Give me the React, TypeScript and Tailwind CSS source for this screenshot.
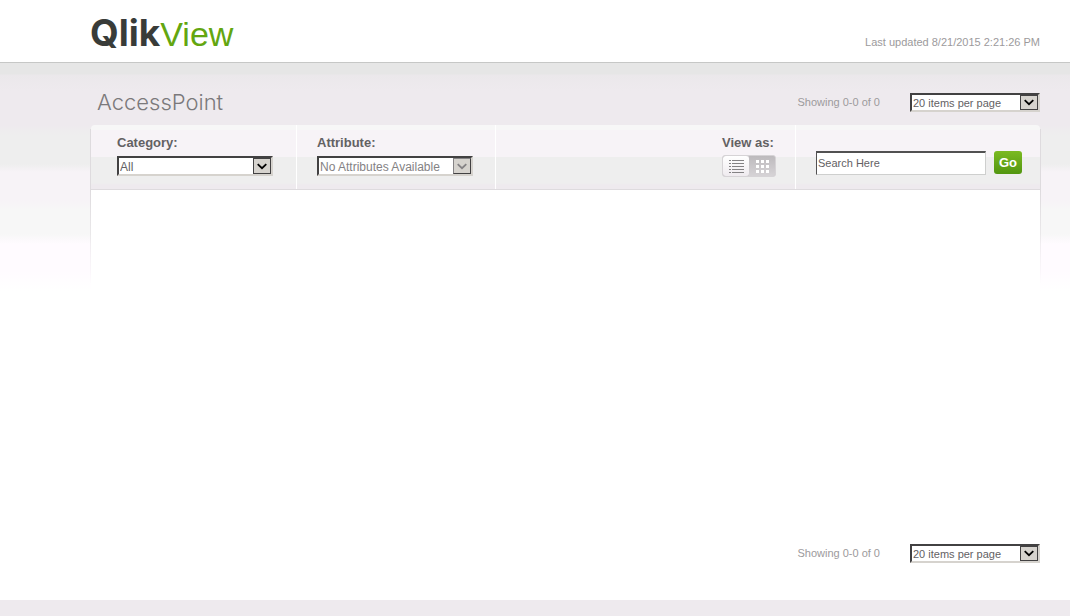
import { useState } from "react";
import clsx from "clsx";

type SelectBoxProps = {
  id: string;
  label?: string;
  options: string[];
  disabled?: boolean;
  className?: string;
};

function SelectBox({ id, label, options, disabled, className }: SelectBoxProps) {
  return (
    <div className={clsx("relative", className)}>
      <select
        id={id}
        aria-label={label}
        disabled={disabled}
        className="block h-full w-full appearance-none border-2 border-t-[#424142] border-l-[#424142] border-r-[#d6d3ce] border-b-[#d6d3ce] bg-white pr-5 pl-px text-[#636163] opacity-100 outline-none disabled:text-[#848284]"
      >
        {options.map((option) => (
          <option key={option}>{option}</option>
        ))}
      </select>
      <span
        className={clsx(
          "pointer-events-none absolute top-[2px] right-[2px] bottom-[2px] flex w-[18px] items-center justify-center border bg-[#d6d3ce]",
          disabled
            ? "border-t-[#848284] border-l-[#848284] border-r-[#424142] border-b-[#424142] text-[#848284]"
            : "border-[#424142] text-black"
        )}
      >
        <svg width="10" height="7" viewBox="0 0 10 7" fill="none" aria-hidden="true">
          <path d="M.7 1.2L5 5.2l4.3-4" stroke="currentColor" strokeWidth="1.8" />
        </svg>
      </span>
    </div>
  );
}

function Pager({ id }: { id: string }) {
  return (
    <div className="flex items-center justify-end gap-[30px] text-[11px]">
      <span className="text-[#9c9a9c]">Showing 0-0 of 0</span>
      <SelectBox
        id={id}
        label="Items per page"
        options={["20 items per page", "50 items per page", "100 items per page"]}
        className="h-[19px] w-[130px]"
      />
    </div>
  );
}

function ListIcon() {
  return (
    <svg width="15" height="13" viewBox="0 0 15 13" fill="#848284" shapeRendering="crispEdges" aria-hidden="true">
      {[0, 3, 6, 9, 12].map((y) => (
        <g key={y}>
          <rect x="0" y={y} width="2" height="1" />
          <rect x="3" y={y} width="12" height="1" />
        </g>
      ))}
    </svg>
  );
}

function GridIcon() {
  return (
    <svg width="13" height="13" viewBox="0 0 13 13" fill="#fff" shapeRendering="crispEdges" aria-hidden="true">
      {[0, 5, 10].map((y) => [0, 5, 10].map((x) => <rect key={`${x}-${y}`} x={x} y={y} width="3" height="3" />))}
    </svg>
  );
}

export default function App() {
  const [view, setView] = useState("grid");

  const viewButton = (name: string) =>
    clsx(
      "flex flex-1 items-center justify-center",
      view === name
        ? "bg-linear-to-b from-[#bdbabd] to-[#d6d3d6]"
        : "bg-linear-to-b from-white to-[#efebef] rounded-[3px]"
    );

  return (
    <div className="flex min-h-screen flex-col bg-white font-['Liberation_Sans',Arial,sans-serif] text-[#636163]">
      <header className="flex h-[63px] items-end justify-between border-b border-[#c6c7c6] bg-white pr-[30px] pl-[90px]">
        <a href="#" className="mb-2 flex items-baseline leading-10">
          <span className="font-[Inter,sans-serif] text-[37px] font-bold text-[#393c39]">Qlik</span>
          <span className="text-[34px] text-[#63a610]">View</span>
        </a>
        <p className="mb-3 text-[11px] leading-4 text-[#9c9a9c]">Last updated 8/21/2015 2:21:26 PM</p>
      </header>

      {/* banded backdrop that fades out behind the top of the content */}
      <main className="flex flex-1 flex-col bg-[linear-gradient(#e6e6e6_11px,#ebe8eb_12px,#eeeaee_28px,#eeeaee_62px,#eeeeee_72px,#eeeeee_101px,#f7f3f7_109px,#f7f3f7_137px,#f7f7f7_147px,#f7f7f7_171px,#fffbff_181px,#fffbff_208px,#ffffff_228px)] pr-[30px] pl-[91px]">
        <div className="flex h-[62px] items-center justify-between pt-4">
          <h1 className="pl-[6px] font-[Inter,sans-serif] text-[22px] leading-7 font-light text-[#7b797b]">AccessPoint</h1>
          <Pager id="per-page-top" />
        </div>

        <div className="relative flex flex-1 flex-col">
          {/* soft edges down both sides of the panel */}
          <div className="pointer-events-none absolute -inset-x-px top-1 h-[155px] border-x border-[#dedbde] mask-b-from-40%" />

          <form
            className="relative flex h-[65px] rounded-t border-b border-[#dedbde] bg-[linear-gradient(#f7f7f7_5px,#f7f3f7_5px,#f7f3f7_32px,#eeeeee_32px,#eeeeee_58px,#eeeaee_60px)] text-[12px]"
            onSubmit={(e) => e.preventDefault()}
          >
            <div className="w-[206px] border-r border-white pt-[10px] pl-[26px]">
              <label htmlFor="category" className="mb-[5px] block text-[13px] leading-4 font-bold">
                Category:
              </label>
              <SelectBox id="category" options={["All"]} className="h-5 w-[156px]" />
            </div>
            <div className="w-[199px] border-r border-white pt-[10px] pl-5">
              <label htmlFor="attribute" className="mb-[5px] block text-[13px] leading-4 font-bold">
                Attribute:
              </label>
              <SelectBox id="attribute" options={["No Attributes Available"]} disabled className="h-5 w-[156px]" />
            </div>
            <div className="ml-auto border-r border-white pt-[10px] pr-[19px]" role="group" aria-labelledby="view-as">
              <span id="view-as" className="mb-1 block text-[13px] leading-4 font-bold">
                View as:
              </span>
              <div className="flex h-[22px] w-[54px] overflow-hidden rounded-[3px] border border-[#d6d3d6] bg-[#cecbce]">
                <button type="button" aria-label="List" className={viewButton("list")} onClick={() => setView("list")}>
                  <ListIcon />
                </button>
                <button type="button" aria-label="Grid" className={viewButton("grid")} onClick={() => setView("grid")}>
                  <GridIcon />
                </button>
              </div>
            </div>
            <div className="flex items-start gap-2 pt-[26px] pr-[18px] pl-5">
              <input
                type="text"
                aria-label="Search"
                defaultValue="Search Here"
                className="h-6 w-[170px] border border-t-2 border-t-[#525152] border-l-[#525152] border-r-[#cecfce] border-b-[#cecfce] bg-white pb-px pl-px text-[11px] outline-none"
              />
              <button
                type="submit"
                className="h-[23px] w-7 rounded-[3px] bg-linear-to-b from-[#7bba21] to-[#529610] text-[13px] font-bold text-white"
              >
                Go
              </button>
            </div>
          </form>

          <section className="relative flex-1 bg-white" />
        </div>

        <div className="-mr-[30px] -ml-[91px] bg-white pr-[30px] pb-[37px]">
          <Pager id="per-page-bottom" />
        </div>
      </main>

      <footer className="h-4 bg-[#eeeaee]" />
    </div>
  );
}
